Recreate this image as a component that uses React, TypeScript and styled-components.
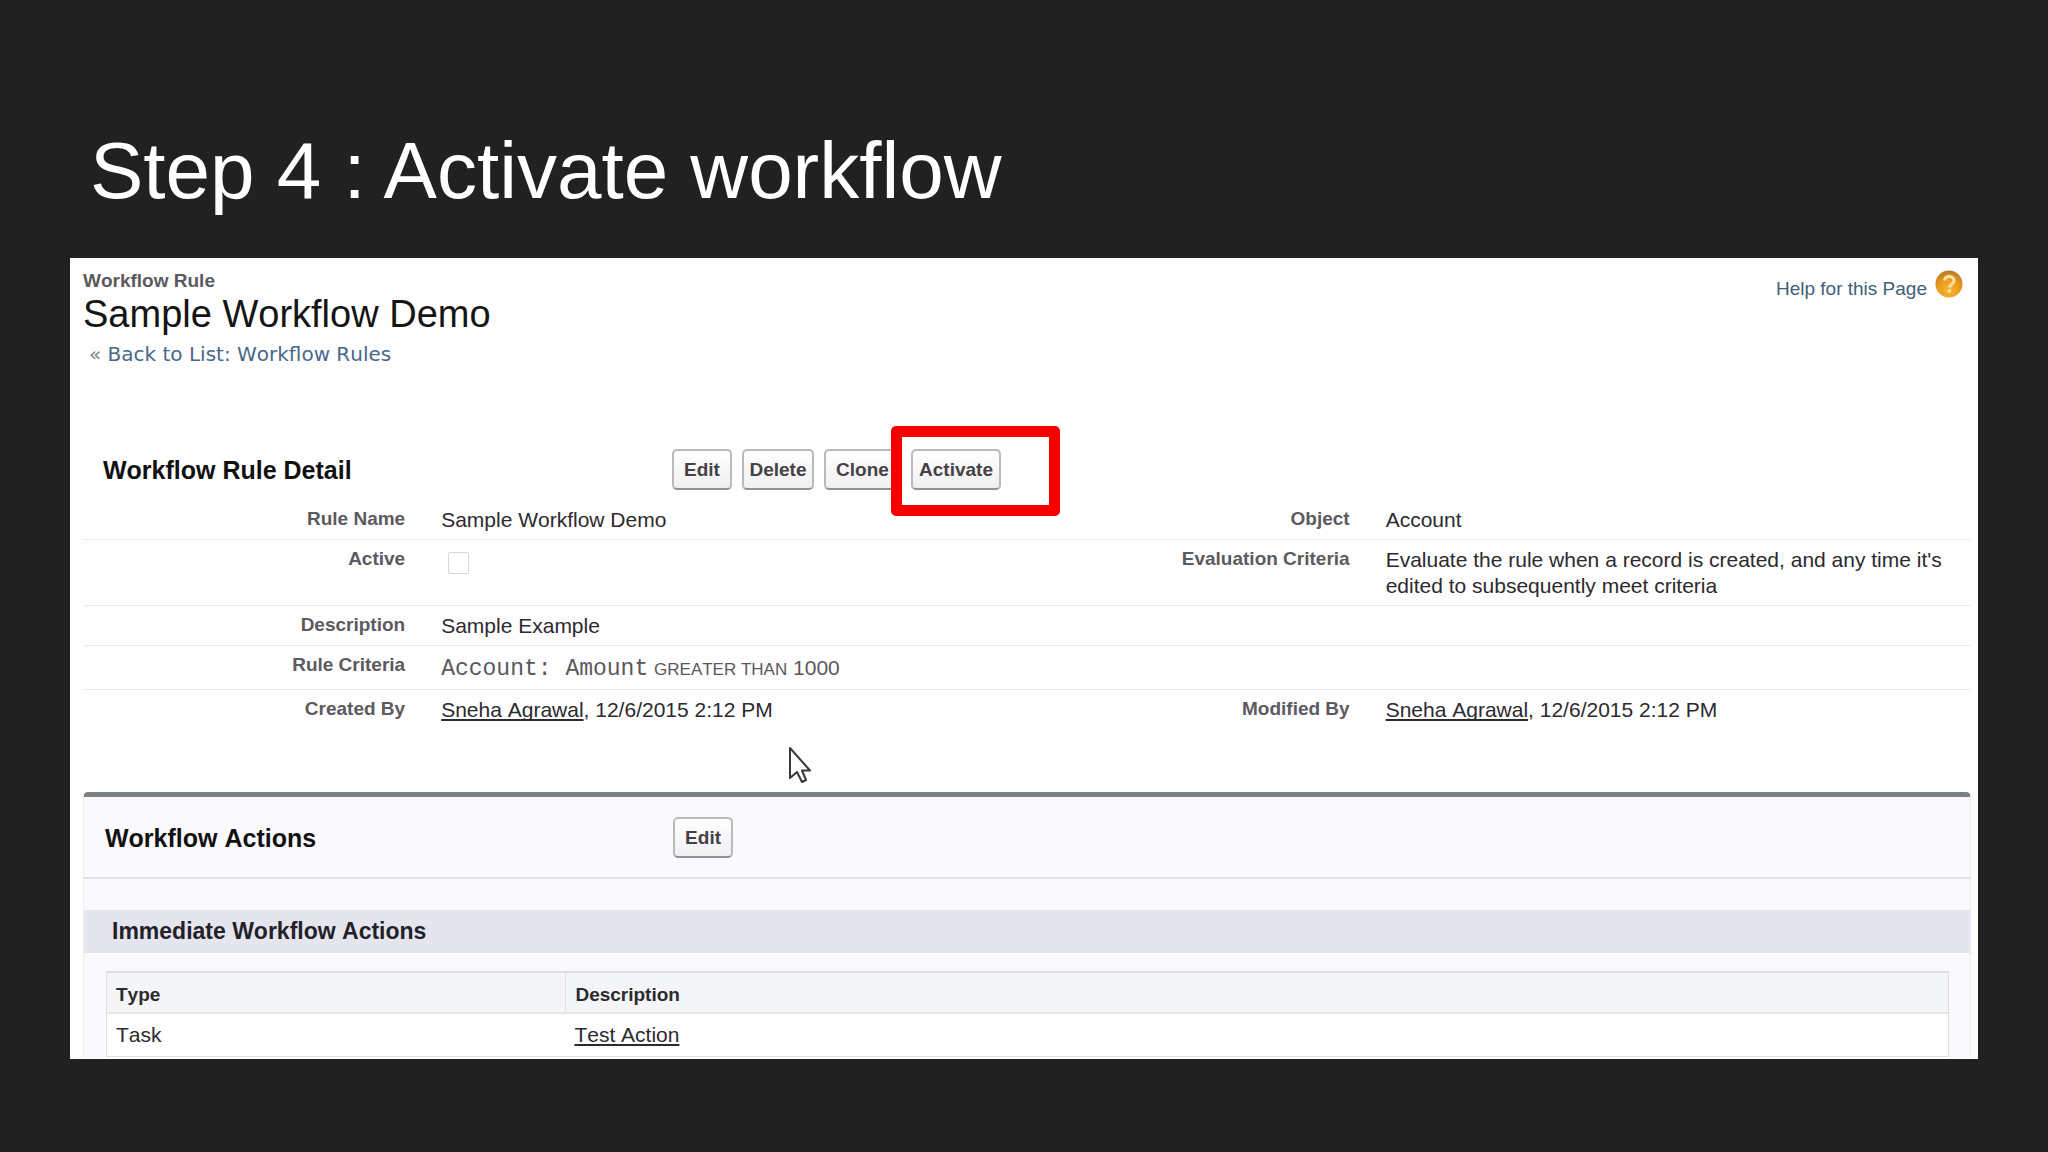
import React from "react";
import styled, { createGlobalStyle } from "styled-components";

const GlobalStyle = createGlobalStyle`
  *, *::before, *::after { box-sizing: border-box; }
  body {
    margin: 0;
    background: #212121;
    font-family: "Liberation Sans", Arial, sans-serif;
  }
  h1, h2, h3, p, dl, dd { margin: 0; }
`;

const Slide = styled.main`
  min-height: 100vh;
  padding: 125px 70px 94px;
  background: #212121;
`;

const SlideTitle = styled.h1`
  padding-left: 20px;
  margin-bottom: 41px;
  color: #fff;
  font-size: 80px;
  font-weight: 400;
  line-height: 92px;
`;

const Card = styled.section`
  position: relative;
  padding: 11px 7px 2px 13px;
  background: #fefefe;
  color: #2c2a2e;
  font-size: 21px;
  font-kerning: none;
  line-height: 26px;
`;

const PageHeader = styled.header`
  display: flex;
  justify-content: space-between;
  align-items: flex-start;
  margin-bottom: 82px;
`;

const Kind = styled.p`
  color: #5c5a5e;
  font-size: 19px;
  font-weight: 700;
  line-height: 24px;
`;

const RecordName = styled.h2`
  color: #151515;
  font-size: 38px;
  font-weight: 400;
  line-height: 42px;
`;

const BackLine = styled.p`
  padding: 6px 0 0 6px;
  color: #7d8790;
  font-family: "DejaVu Sans", Verdana, sans-serif;
  font-size: 20px;
  line-height: 26px;
`;

const BlueLink = styled.a`
  color: #49688a;
  text-decoration: none;
`;

const HelpLink = styled.a`
  display: flex;
  align-items: flex-start;
  gap: 8px;
  padding: 1px 8px 0 0;
  color: #3f6178;
  font-size: 19px;
  line-height: 38px;
  text-decoration: none;
`;

const SectionHeader = styled.div`
  display: grid;
  grid-template-columns: 589fr 1299fr;
  align-items: center;
`;

const SectionTitle = styled.h3`
  padding-left: 20px;
  color: #111;
  font-size: 25px;
  line-height: 32px;
`;

const Buttons = styled.div`
  display: flex;
  gap: 10px;
`;

const Button = styled.button<{ $width: number }>`
  width: ${(p) => p.$width}px;
  height: 41px;
  padding: 0;
  border: 2px solid #bbb9bd;
  border-bottom-color: #929094;
  border-radius: 5px;
  background: linear-gradient(#fff, #f0eff1);
  color: #444246;
  font: 700 19px/24px "Liberation Sans", Arial, sans-serif;
`;

const Highlighted = styled.span`
  position: relative;
  display: flex;
`;

const HighlightBox = styled.span`
  position: absolute;
  top: -23px;
  left: -20px;
  width: 169px;
  height: 90px;
  border: 11px solid #f60000;
  border-radius: 5px;
  pointer-events: none;
`;

const Details = styled.dl`
  margin: 10px 0 63px;
`;

const DetailRow = styled.div<{ $last?: boolean }>`
  display: grid;
  grid-template-columns: 322fr 622fr 322fr 621fr;
  padding: 7px 0 6px;
  border-bottom: ${(p) => (p.$last ? "0" : "1px solid #ebeaed")};
`;

const Label = styled.dt`
  color: #5c5a5e;
  font-size: 19px;
  font-weight: 700;
  line-height: 24px;
  text-align: right;
`;

const Value = styled.dd`
  padding-left: 36px;
`;

const CriteriaValue = styled(Value)`
  padding-top: 2px;
  color: #5a585c;
`;

const Field = styled.code`
  font-family: "Liberation Mono", "Courier New", monospace;
  font-size: 23px;
  line-height: 26px;
`;

const Operator = styled.span`
  font-size: 17px;
`;

const ActiveBox = styled.input`
  appearance: none;
  display: block;
  width: 21px;
  height: 22px;
  margin: 5px 0 0 7px;
  border: 1px solid #d6d4d8;
  border-radius: 2px;
  background: #fff;
`;

const TextLink = styled.a`
  color: inherit;
  text-decoration: underline;
  text-decoration-thickness: 2px;
  text-underline-offset: 2px;
  text-decoration-skip-ink: none;
`;

const ActionsPanel = styled.section`
  border: 1px solid #ececee;
  border-top: 5px solid #7b8180;
  border-bottom: 0;
  border-radius: 5px 5px 0 0;
  background: #fafafc;
`;

const PanelHeader = styled(SectionHeader)`
  height: 80px;
  padding: 1px 0 0 1px;
`;

const PanelRule = styled.div`
  height: 33px;
  border-top: 2px solid #e0dfe2;
`;

const Band = styled.h3`
  padding: 6px 28px 7px;
  background: #e5e5ee;
  color: #222127;
  font-size: 23px;
  line-height: 30px;
`;

const TableWrap = styled.div`
  padding: 18px 21px 0 22px;
`;

const Table = styled.table`
  width: 100%;
  table-layout: fixed;
  border-collapse: separate;
  border-spacing: 0;
  border: 1px solid #dedee1;
  border-top-width: 2px;
  background: #fefefe;
  text-align: left;
`;

const HeadCell = styled.th<{ $first?: boolean }>`
  width: ${(p) => (p.$first ? "24.9%" : "auto")};
  height: 41px;
  padding: 4px 9px 0;
  border-left: ${(p) => (p.$first ? "0" : "1px solid #e2e2e5")};
  border-bottom: 2px solid #e6e6e9;
  background: #f4f5f7;
  color: #2c2a2e;
  font-size: 19px;
  line-height: 24px;
`;

const Cell = styled.td`
  height: 42px;
  padding: 0 9px;
`;

const Cursor = styled.svg`
  position: absolute;
  left: 718px;
  top: 488px;
  width: 24px;
  height: 38px;
`;

function HelpIcon() {
  return (
    <svg width="28" height="30" viewBox="0 0 28 30" aria-hidden="true">
      <defs>
        <radialGradient id="help-fill" cx="50%" cy="75%" r="75%">
          <stop offset="0" stopColor="#f9b632" />
          <stop offset="0.6" stopColor="#e8971b" />
          <stop offset="1" stopColor="#b27a2c" />
        </radialGradient>
      </defs>
      <circle cx="14" cy="14" r="13.5" fill="url(#help-fill)" />
      <path
        d="M9.5 10.5C10 7.5 12 6.5 14.3 6.5c2.7 0 4.7 1.5 4.7 4 0 3.7-4.3 3.7-4.5 7"
        fill="none"
        stroke="#ffe0a0"
        strokeWidth="3"
      />
      <circle cx="14.3" cy="21" r="1.9" fill="#ffe0a0" />
    </svg>
  );
}

function UserStamp() {
  return (
    <>
      <TextLink href="#user">Sneha Agrawal</TextLink>, 12/6/2015 2:12 PM
    </>
  );
}

export default function App() {
  return (
    <>
      <GlobalStyle />
      <Slide>
        <SlideTitle>Step 4 : Activate workflow</SlideTitle>
        <Card>
          <PageHeader>
            <div>
              <Kind>Workflow Rule</Kind>
              <RecordName>Sample Workflow Demo</RecordName>
              <BackLine>
                « <BlueLink href="#rules">Back to List: Workflow Rules</BlueLink>
              </BackLine>
            </div>
            <HelpLink href="#help">
              Help for this Page
              <HelpIcon />
            </HelpLink>
          </PageHeader>

          <SectionHeader>
            <SectionTitle>Workflow Rule Detail</SectionTitle>
            <Buttons>
              <Button type="button" $width={60}>Edit</Button>
              <Button type="button" $width={72}>Delete</Button>
              <Button type="button" $width={77}>Clone</Button>
              <Highlighted>
                <Button type="button" $width={90}>Activate</Button>
                <HighlightBox />
              </Highlighted>
            </Buttons>
          </SectionHeader>

          <Details>
            <DetailRow>
              <Label>Rule Name</Label>
              <Value>Sample Workflow Demo</Value>
              <Label>Object</Label>
              <Value>Account</Value>
            </DetailRow>
            <DetailRow>
              <Label>
                <label htmlFor="active">Active</label>
              </Label>
              <Value>
                <ActiveBox id="active" type="checkbox" disabled />
              </Value>
              <Label>Evaluation Criteria</Label>
              <Value>
                Evaluate the rule when a record is created, and any time it's edited to
                subsequently meet criteria
              </Value>
            </DetailRow>
            <DetailRow>
              <Label>Description</Label>
              <Value>Sample Example</Value>
            </DetailRow>
            <DetailRow>
              <Label>Rule Criteria</Label>
              <CriteriaValue>
                <Field>Account: Amount</Field> <Operator>GREATER THAN</Operator> 1000
              </CriteriaValue>
            </DetailRow>
            <DetailRow $last>
              <Label>Created By</Label>
              <Value>
                <UserStamp />
              </Value>
              <Label>Modified By</Label>
              <Value>
                <UserStamp />
              </Value>
            </DetailRow>
          </Details>

          <ActionsPanel>
            <PanelHeader>
              <SectionTitle>Workflow Actions</SectionTitle>
              <Buttons>
                <Button type="button" $width={60}>Edit</Button>
              </Buttons>
            </PanelHeader>
            <PanelRule />
            <Band>Immediate Workflow Actions</Band>
            <TableWrap>
              <Table>
                <thead>
                  <tr>
                    <HeadCell $first>Type</HeadCell>
                    <HeadCell>Description</HeadCell>
                  </tr>
                </thead>
                <tbody>
                  <tr>
                    <Cell>Task</Cell>
                    <Cell>
                      <TextLink href="#action">Test Action</TextLink>
                    </Cell>
                  </tr>
                </tbody>
              </Table>
            </TableWrap>
          </ActionsPanel>

          <Cursor viewBox="0 0 24 38" aria-hidden="true">
            <path
              d="M2 2V32L9 26L14 36L18 34L14 24.5H22Z"
              fill="#fff"
              stroke="#3a383c"
              strokeWidth="2"
              strokeLinejoin="round"
            />
          </Cursor>
        </Card>
      </Slide>
    </>
  );
}
